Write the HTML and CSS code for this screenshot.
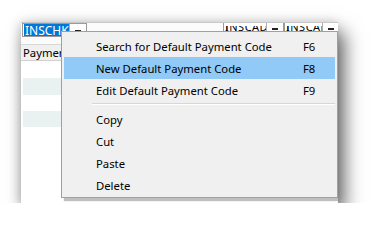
FILE: index.html
```html
<!DOCTYPE html>
<html lang="en">
  <head>
    <meta charset="UTF-8" />
    <title>Default Payment Code menu</title>
    <link rel="stylesheet" href="styles.css">
  </head>
  <body>
    <div class="shot">
      <div class="toolbar">
        <div class="combo combo-first">
          <span class="combo-text"><span class="selected">INSCHK</span></span>
          <span class="combo-btn"><span class="dash"></span></span>
        </div>
        <div class="toolbar-spacer"></div>
        <div class="combo combo-cut">
          <span class="combo-text"><span class="cut-text">INSCAD I</span></span>
          <span class="combo-btn"><span class="dash"></span></span>
        </div>
        <div class="combo combo-cut combo-last">
          <span class="combo-text"><span class="cut-text">INSCAD I</span></span>
          <span class="combo-btn"><span class="dash"></span></span>
        </div>
      </div>

      <div class="grid">
        <div class="grid-header">Payment</div>
        <div class="grid-row"></div>
        <div class="grid-row tint"></div>
        <div class="grid-row short"></div>
        <div class="grid-row short tint"></div>
        <div class="grid-row"></div>
      </div>

      <!-- context menu sits over the grid -->
      <div class="menu">
        <div class="menu-item"><span>Search for Default Payment Code</span><span class="key">F6</span></div>
        <div class="menu-item active"><span>New Default Payment Code</span><span class="key">F8</span></div>
        <div class="menu-item"><span>Edit Default Payment Code</span><span class="key">F9</span></div>
        <div class="menu-sep"></div>
        <div class="menu-item"><span>Copy</span></div>
        <div class="menu-item"><span>Cut</span></div>
        <div class="menu-item"><span>Paste</span></div>
        <div class="menu-item"><span>Delete</span></div>
      </div>
    </div>
  </body>
</html>
```

FILE: styles.css
```css
:root {
  --menu-bg: #f0f0f0;
  --menu-border: #a0a0a0;
  --highlight: #91c9f7;
  --select-blue: #0078d7;
  --row-tint: #eaf1f1;
  --ui-font: "Noto Sans", "Open Sans", sans-serif;
}

* {
  box-sizing: border-box;
}

body {
  margin: 0;
  padding: 22px 0 0 21px;
  background: #fff;
  font-family: var(--ui-font);
  font-size: 11.3px;
  color: #000;
}

.shot {
  position: relative;
  width: 317px;
  height: 181px;
  overflow: hidden;
  background: #fff;
  box-shadow: 6px 10px 18px rgba(0, 0, 0, 0.62), -2px 0 10px rgba(0, 0, 0, 0.15);
}

.toolbar {
  display: flex;
  height: 22px;
  border-top: 1px solid #c8c8c8;
  background: #fbfbfb;
}

.combo {
  display: flex;
  height: 14px;
  border: 1px solid #9a9a9a;
  background: #fff;
}

.combo-first {
  width: 65px;
  margin-left: 1px;
}

.combo-text {
  flex: 1;
  display: flex;
  overflow: hidden;
  padding-left: 1px;
}

.selected {
  background: var(--select-blue);
  color: #fff;
  line-height: 13px;
  font-size: 12px;
  padding: 0 1px;
}

.combo-btn {
  width: 17px;
  display: flex;
  justify-content: center;
  border-left: 1px solid #b0b0b0;
}

.dash {
  width: 6px;
  height: 2px;
  margin-top: 6px;
  background: #222;
}

.toolbar-spacer {
  flex: 1;
}

.combo-cut {
  width: 61px;
  height: 10px;
  border-top: none;
}

.combo-cut .dash {
  margin-top: 5px;
}

.combo-last {
  width: 56px;
  margin-right: -2px;
}

.cut-text {
  display: block;
  height: 6px;
  margin-top: 3px;
  overflow: hidden;
  font-size: 11px;
  line-height: 1px;
  letter-spacing: 0.5px;
}

.grid {
  display: flex;
  flex-direction: column;
}

.grid-header {
  height: 17px;
  width: 40px;
  padding-left: 2px;
  background: #f0f0f0;
  border-top: 1px solid #d8d8d8;
  border-bottom: 1px solid #d0d0d0;
  line-height: 15px;
  white-space: nowrap;
  overflow: hidden;
}

.grid-row {
  height: 17px;
  margin-left: 2px;
}

.grid-row.short {
  height: 16px;
}

.grid-row.tint {
  background: var(--row-tint);
}

.menu {
  position: absolute;
  left: 40px;
  top: 9px;
  width: 277px;
  height: 167px;
  padding: 3px 2px;
  background: var(--menu-bg);
  border: 1px solid var(--menu-border);
  box-shadow: 3px 3px 1px rgba(0, 0, 0, 0.25);
}

.menu-item {
  display: flex;
  height: 22px;
  align-items: center;
  padding-left: 32px;
  white-space: nowrap;
}

.menu-item span:first-child {
  width: 207px;
}

.menu-item.active {
  background: var(--highlight);
}

.menu-sep {
  height: 7px;
  margin-left: 28px;
  padding-top: 2px;
}

.menu-sep::before {
  content: "";
  display: block;
  border-top: 1px solid #d7d7d7;
  border-bottom: 1px solid #fff;
}
```
